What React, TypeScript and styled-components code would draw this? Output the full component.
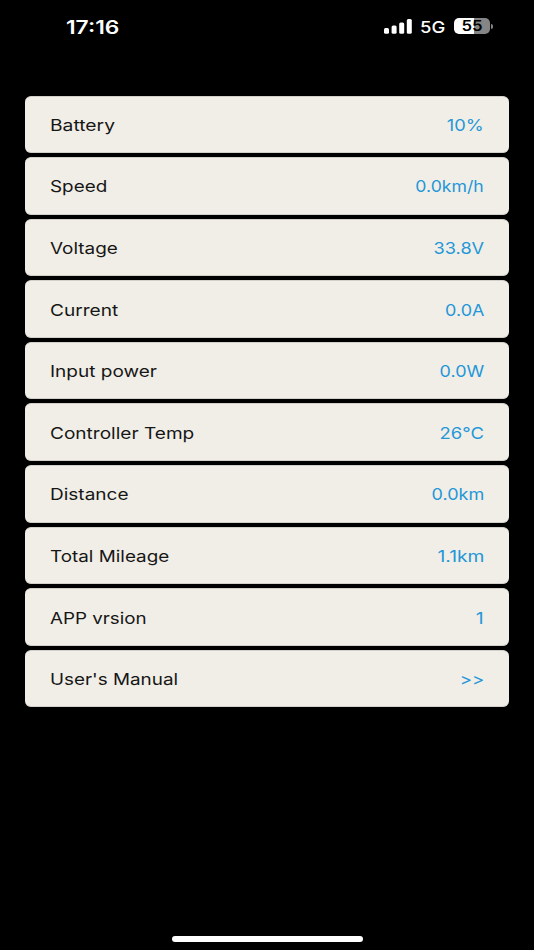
import React from "react";
import styled, { createGlobalStyle } from "styled-components";

const GlobalStyle = createGlobalStyle`
  * { box-sizing: border-box; }
  html, body { margin: 0; background: #000; }
  body { overflow: hidden; font-family: Inter, "Liberation Sans", sans-serif; }
`;

const Screen = styled.div`
  width: 534px;
  height: 950px;
  display: flex;
  flex-direction: column;
  background: #000;
`;

const StatusBar = styled.header`
  height: 95.5px;
  flex: none;
  display: flex;
  justify-content: space-between;
  align-items: flex-start;
  padding: 16px 41px 0 65.8px;
  color: #fff;
`;

const Clock = styled.time`
  font-size: 18.5px;
  line-height: 22px;
  font-weight: 600;
  transform: scaleX(1.23);
  transform-origin: left center;
`;

const Indicators = styled.div`
  height: 20px;
  display: flex;
  align-items: center;
`;

const Network = styled.span`
  width: 25px;
  margin: 1px 9px 0 8px;
  font-size: 16.5px;
  line-height: 20px;
  font-weight: 500;
  white-space: nowrap;
  transform: scaleX(1.12);
  transform-origin: left center;
`;

const Battery = styled.div`
  display: flex;
  align-items: center;
  gap: 1px;
`;

const BatteryBody = styled.div<{ $level: number }>`
  width: 36px;
  height: 16px;
  border-radius: 5px;
  display: flex;
  align-items: center;
  justify-content: center;
  background: linear-gradient(to right, #fff ${p => p.$level}%, #858585 ${p => p.$level}%);
`;

const BatteryLevel = styled.span`
  color: #000;
  font-size: 14.5px;
  line-height: 16px;
  font-weight: 600;
  transform: scaleX(1.16);
`;

const BatteryTip = styled.div`
  width: 2px;
  height: 5px;
  border-radius: 0 2px 2px 0;
  background: #858585;
`;

const List = styled.main`
  display: flex;
  flex-direction: column;
  gap: 4.1px;
  padding: 0 25px;
`;

const Row = styled.div`
  height: 57.5px;
  flex: none;
  display: flex;
  justify-content: space-between;
  align-items: center;
  padding: 1px 25px 0 25.3px;
  border: 1px solid #d2d0c9;
  border-width: 1px 0;
  border-radius: 6px;
  background: #f1eee7;
  font-size: 16.2px;
  line-height: 22px;
  white-space: nowrap;
`;

const Label = styled.span<{ $stretch: number }>`
  color: #161616;
  transform: scaleX(${p => p.$stretch});
  transform-origin: left center;
`;

const Value = styled.span<{ $stretch: number }>`
  color: #2497d8;
  transform: scaleX(${p => p.$stretch});
  transform-origin: right center;
`;

const HomeIndicator = styled.div`
  width: 191px;
  height: 6px;
  margin: auto auto 8px;
  border-radius: 3px;
  background: #fff;
`;

interface Reading {
  label: string;
  labelStretch: number;
  value: string;
  valueStretch: number;
}

const readings: Reading[] = [
  { label: "Battery", labelStretch: 1.19, value: "10%", valueStretch: 1.13 },
  { label: "Speed", labelStretch: 1.165, value: "0.0km/h", valueStretch: 1.09 },
  { label: "Voltage", labelStretch: 1.17, value: "33.8V", valueStretch: 1.12 },
  { label: "Current", labelStretch: 1.18, value: "0.0A", valueStretch: 1.11 },
  { label: "Input power", labelStretch: 1.175, value: "0.0W", valueStretch: 1.11 },
  { label: "Controller Temp", labelStretch: 1.177, value: "26°C", valueStretch: 1.14 },
  { label: "Distance", labelStretch: 1.175, value: "0.0km", valueStretch: 1.115 },
  { label: "Total Mileage", labelStretch: 1.165, value: "1.1km", valueStretch: 1.19 },
  { label: "APP vrsion", labelStretch: 1.16, value: "1", valueStretch: 1.2 },
  { label: "User's Manual", labelStretch: 1.165, value: ">>", valueStretch: 1.15 },
];

function Signal() {
  return (
    <svg width="28" height="15" viewBox="0 0 28 15" fill="#fff">
      <rect x="0" y="9" width="5" height="5.8" rx="1.5" />
      <rect x="7.6" y="6.6" width="5" height="8.2" rx="1.5" />
      <rect x="15.2" y="3.5" width="5" height="11.3" rx="1.5" />
      <rect x="22.8" y="0.1" width="5" height="14.7" rx="1.5" />
    </svg>
  );
}

export default function App() {
  return (
    <Screen>
      <GlobalStyle />
      <StatusBar>
        <Clock>17:16</Clock>
        <Indicators>
          <Signal />
          <Network>5G</Network>
          <Battery>
            <BatteryBody $level={55}>
              <BatteryLevel>55</BatteryLevel>
            </BatteryBody>
            <BatteryTip />
          </Battery>
        </Indicators>
      </StatusBar>
      <List>
        {readings.map(r => (
          <Row key={r.label}>
            <Label $stretch={r.labelStretch}>{r.label}</Label>
            <Value $stretch={r.valueStretch}>{r.value}</Value>
          </Row>
        ))}
      </List>
      <HomeIndicator />
    </Screen>
  );
}
